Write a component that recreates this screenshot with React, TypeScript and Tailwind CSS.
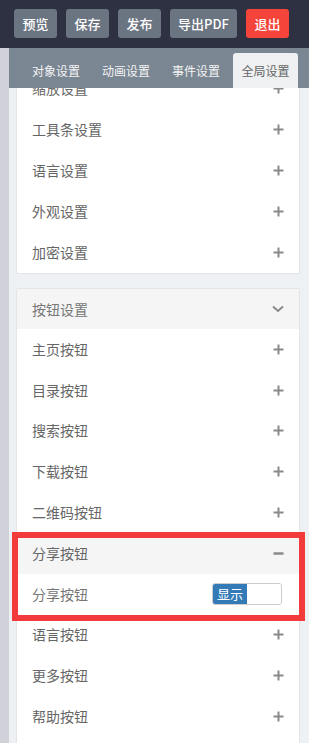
import React from "react";

const font = { fontFamily: '"Microsoft YaHei", "Noto Sans CJK SC", "Liberation Sans", sans-serif' };

function Plus() {
  return (
    <svg width="11" height="11" viewBox="0 0 11 11" className="text-[#8a8a8a]">
      <path d="M5.5 0.5v10M0.5 5.5h10" stroke="currentColor" strokeWidth="2" />
    </svg>
  );
}

function Minus() {
  return (
    <svg width="11" height="11" viewBox="0 0 11 11" className="text-[#8a8a8a]">
      <path d="M0.5 5.5h10" stroke="currentColor" strokeWidth="2.5" />
    </svg>
  );
}

function ChevronDown() {
  return (
    <svg width="12" height="8" viewBox="0 0 12 8" className="text-[#8a8a8a]">
      <path d="M1 1.5l5 4.5 5-4.5" fill="none" stroke="currentColor" strokeWidth="2" />
    </svg>
  );
}

function Row({ label, h = "h-[41px]" }: { label: string; h?: string }) {
  return (
    <div className={`flex items-center justify-between pl-[15px] pr-[15px] ${h}`}>
      <span className="text-[14px] text-[#666]">{label}</span>
      <Plus />
    </div>
  );
}

const topButtons = [
  { label: "预览", w: "w-[43px]" },
  { label: "保存", w: "w-[43px]" },
  { label: "发布", w: "w-[43px]" },
  { label: "导出PDF", w: "w-[67px]" },
];

const tabs = ["对象设置", "动画设置", "事件设置"];

const buttonRows = ["主页按钮", "目录按钮", "搜索按钮", "下载按钮", "二维码按钮"];
const afterRows = ["语言按钮", "更多按钮", "帮助按钮"];

export default function App() {
  return (
    <div className="w-[309px] h-[743px] overflow-hidden flex flex-col bg-[#eef1f4]" style={font}>
      {/* top toolbar */}
      <div className="h-[48px] bg-[#2d3142] flex items-start pt-[9px] pl-[14px] gap-[9px] shrink-0">
        {topButtons.map((b) => (
          <div
            key={b.label}
            className={`${b.w} h-[29px] rounded-[3px] bg-[#6b7582] text-white text-[13px] font-medium flex items-center justify-center`}
          >
            {b.label}
          </div>
        ))}
        <div className="w-[43px] h-[29px] rounded-[3px] bg-[#f5453a] text-white text-[13px] font-medium flex items-center justify-center">
          退出
        </div>
      </div>

      <div className="flex flex-1 min-h-0">
        {/* left strip */}
        <div className="w-[9px] bg-[#d0d1d9] shrink-0" />

        <div className="flex-1 flex flex-col min-h-0">
          {/* tab bar */}
          <div className="h-[40px] bg-[#7a8692] flex items-end pl-[12px] shrink-0 relative z-10">
            {tabs.map((t) => (
              <div key={t} className="w-[70px] h-[35px] flex items-center justify-center text-[12px] text-[#f4f4f4]">
                {t}
              </div>
            ))}
            <div className="w-[65px] h-[35px] ml-[2px] rounded-t-[3px] bg-[#eef0f2] flex items-center justify-center text-[12px] text-[#666]">
              全局设置
            </div>
          </div>

          {/* scrolled content */}
          <div className="flex-1 min-h-0 overflow-hidden">
            <div className="-mt-[21px] pl-[7px] pr-[9px] relative">
              <div className="bg-white border border-[#e3e5e8] rounded-[2px]">
                <Row label="缩放设置" />
                <Row label="工具条设置" />
                <Row label="语言设置" />
                <Row label="外观设置" />
                <Row label="加密设置" />
              </div>

              <div className="mt-[14px] bg-white border border-[#e3e5e8] rounded-[2px] relative">
                <div className="h-[40px] bg-[#f5f5f5] flex items-center justify-between px-[15px]">
                  <span className="text-[14px] text-[#777]">按钮设置</span>
                  <ChevronDown />
                </div>
                {buttonRows.map((r) => (
                  <Row key={r} label={r} h="h-[40.8px]" />
                ))}
                <div className="relative">
                  <div className="h-[40.8px] bg-[#f5f5f5] flex items-center justify-between px-[15px]">
                    <span className="text-[14px] text-[#666]">分享按钮</span>
                    <Minus />
                  </div>
                  <div className="h-[40.8px] bg-white flex items-center justify-between pl-[15px] pr-[17px]">
                    <span className="text-[14px] text-[#777]">分享按钮</span>
                    <div className="w-[70px] h-[22px] rounded-[3px] border border-[#ccc] flex overflow-hidden">
                      <div className="w-[34px] bg-[#337ab7] text-white text-[13px] flex items-center justify-center">
                        显示
                      </div>
                      <div className="flex-1 bg-white" />
                    </div>
                  </div>
                  {/* red annotation frame */}
                  <div className="absolute -left-[5px] -right-[6px] -top-[1px] -bottom-[6px] border-[6px] border-[#f33b3b] pointer-events-none" />
                </div>
                {afterRows.map((r) => (
                  <Row key={r} label={r} h="h-[40.8px]" />
                ))}
                <Row label="关闭按钮" h="h-[40.8px]" />
              </div>
            </div>
          </div>
        </div>
      </div>
    </div>
  );
}
